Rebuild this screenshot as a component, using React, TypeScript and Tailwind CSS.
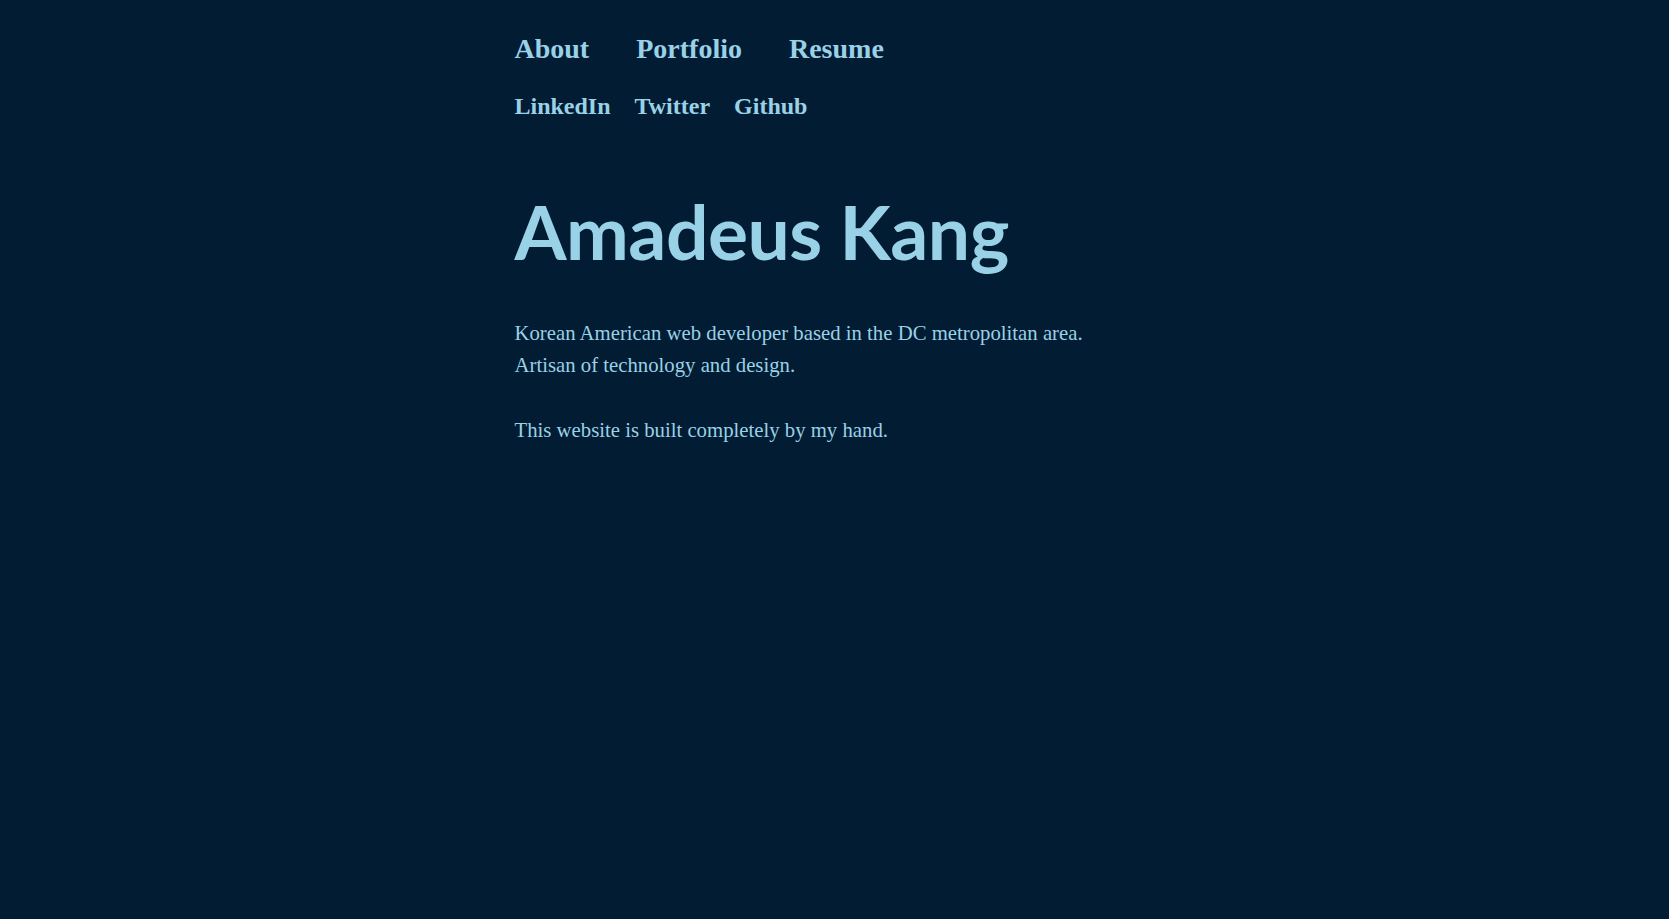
export default function App() {
  const serif = { fontFamily: '"Liberation Serif", "DejaVu Serif", serif' };
  return (
    <div className="min-h-screen bg-[#021c33] text-[#99d1e6]">
      <div className="mx-auto max-w-[640px] pt-[31px]" style={serif}>
        <nav className="flex gap-[47px] text-[28px] font-bold leading-[36px]">
          <a href="#">About</a>
          <a href="#">Portfolio</a>
          <a href="#">Resume</a>
        </nav>
        <div className="mt-[24px] flex gap-[24px] text-[24px] font-bold leading-[30px]">
          <a href="#">LinkedIn</a>
          <a href="#">Twitter</a>
          <a href="#">Github</a>
        </div>
        <h1
          className="mt-[70px] text-[75px] font-bold leading-[80px] tracking-[-0.5px]"
          style={{ fontFamily: 'Lato, "Open Sans", sans-serif' }}
        >
          Amadeus Kang
        </h1>
        <div className="mt-[46px] text-[20.75px] leading-[32px]">
          <p>
            Korean American web developer based in the DC metropolitan area.
            <br />
            Artisan of technology and design.
          </p>
          <p className="mt-[33px]">This website is built completely by my hand.</p>
        </div>
      </div>
    </div>
  );
}
